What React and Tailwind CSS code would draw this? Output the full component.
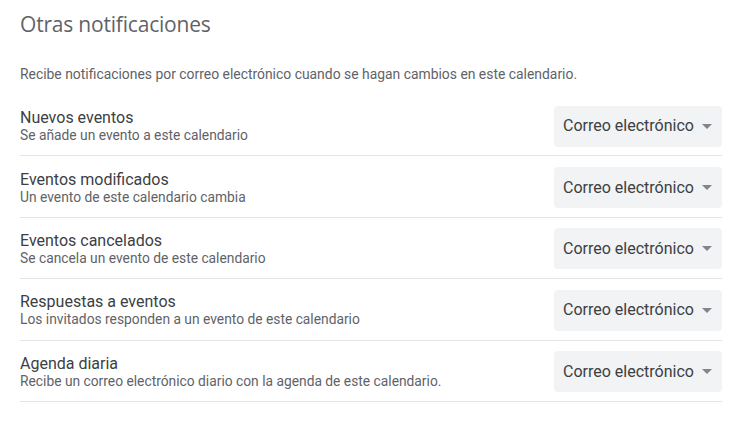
const rows = [
  ['Nuevos eventos', 'Se añade un evento a este calendario'],
  ['Eventos modificados', 'Un evento de este calendario cambia'],
  ['Eventos cancelados', 'Se cancela un evento de este calendario'],
  ['Respuestas a eventos', 'Los invitados responden a un evento de este calendario'],
  ['Agenda diaria', 'Recibe un correo electrónico diario con la agenda de este calendario.'],
];

function Select() {
  return (
    <div className="flex h-[41px] w-[168px] items-center justify-between rounded bg-[#f1f3f4] pl-[9px] pr-[10px]">
      <span className="text-[16px] text-[#3c4043]">Correo electrónico</span>
      <svg width="10" height="5" viewBox="0 0 10 5">
        <path d="M0 0 L5 5 L10 0 Z" fill="#80868b" />
      </svg>
    </div>
  );
}

export default function App() {
  return (
    <div className="h-[423px] w-[750px] bg-white px-[20px] pt-[11px] font-['Roboto',sans-serif]">
      <h2 className="text-[21px] leading-[26px] text-[#5f6368] font-['Open_Sans',sans-serif] tracking-[-0.2px]">Otras notificaciones</h2>
      <p className="mt-[29px] text-[13.9px] leading-[16px] text-[#5f6368]">
        Recibe notificaciones por correo electrónico cuando se hagan cambios en este calendario.
      </p>
      <div className="mt-[13px] w-[702px]">
        {rows.map(([t, s]) => (
          <div key={t} className="flex h-[61.4px] items-center justify-between border-b border-[#e4e5e7] pt-[2px]">
            <div className="flex flex-col">
              <span className="text-[16px] leading-[18px] text-[#3c4043]">{t}</span>
              <span className="text-[13.8px] leading-[16px] text-[#5f6368]">{s}</span>
            </div>
            <Select />
          </div>
        ))}
      </div>
    </div>
  );
}
